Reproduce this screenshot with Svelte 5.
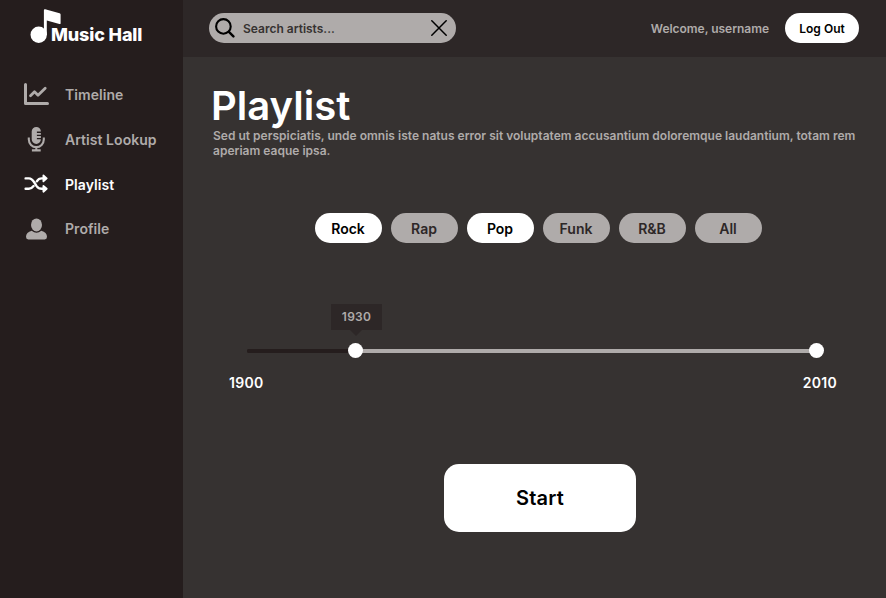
<script>
  let genres = $state([
    { name: 'Rock', on: true },
    { name: 'Rap', on: false },
    { name: 'Pop', on: true },
    { name: 'Funk', on: false },
    { name: 'R&B', on: false },
    { name: 'All', on: false }
  ]);
  const nav = ['Timeline', 'Artist Lookup', 'Playlist', 'Profile'];
  let active = $state('Playlist');
</script>

<div class="app">
  <aside>
    <div class="logo">
      <svg width="31" height="36" viewBox="0 0 31 36" fill="#fff">
        <circle cx="8.7" cy="26.8" r="8.2" />
        <path d="M13.9 2.2Q13.9 1 15.2 1.3L29.6 5.3Q30.6 5.6 30.6 6.5V15.2Q30.6 16.3 29.4 16L16.8 12.5V27H13.9Z" />
      </svg>
      <span>Music Hall</span>
    </div>
    <nav>
      {#each nav as item}
        <button class="item" class:active={active === item} onclick={() => (active = item)}>
          <svg width="28" height="28" viewBox="0 0 28 28" fill="none" stroke="currentColor">
            {#if item === 'Timeline'}
              <path d="M3.5 4.5V23.5H25.5" stroke-width="3" stroke-linecap="round" stroke-linejoin="round" />
              <path d="M8.5 15.8L12.5 11.8L16 15.2L23.2 8.3" stroke-width="2.8" stroke-linecap="round" stroke-linejoin="round" />
            {:else if item === 'Artist Lookup'}
              <path d="M9.8 6.2a4.6 4.6 0 0 1 9.2 0h-4v1.4h4v1.8h-4v1.4h4v1.8h-4v1.4h4a4.6 4.6 0 0 1-9.2 0Z" transform="translate(-.1 .3)" fill="currentColor" stroke="none" />
              <path d="M6.8 12.5V14.6A7.5 7.5 0 0 0 21.8 14.6V12.5M14.3 22V25M9.9 25.4H18.7" stroke-width="2.1" />
            {:else if item === 'Playlist'}
              <g transform="translate(.6 -.4)">
                <path d="M3 8.8H6.3C9 8.8 10.4 10.7 12 13.3L14 16.5C15.5 18.5 16.8 19.2 19.2 19.2H22M3 19.2H6.3C8.4 19.2 9.7 18.2 11 16.5M14.2 11.7C15.5 9.7 16.8 8.8 19.2 8.8H22" stroke-width="2.4" stroke-linecap="round" />
                <path d="M20.8 5.9L24.1 8.8L20.8 11.7ZM20.8 16.3L24.1 19.2L20.8 22.1Z" fill="currentColor" stroke-width="1.8" stroke-linejoin="round" />
              </g>
            {:else}
              <ellipse cx="14.5" cy="9.9" rx="5.5" ry="6.5" fill="currentColor" stroke="none" />
              <path d="M9.7 15.8Q14.5 19.6 19.3 15.8C23 17 25 18.8 25 21.8Q25 24.4 22.7 24.4H6.3Q4 24.4 4 21.8C4 18.8 6 17 9.7 15.8Z" fill="currentColor" stroke="none" />
            {/if}
          </svg>
          <span>{item}</span>
        </button>
      {/each}
    </nav>
  </aside>

  <div class="page">
    <header>
      <div class="search">
        <svg width="20" height="20" viewBox="0 0 20 20" fill="none" stroke="#000" stroke-linecap="round">
          <circle cx="8.4" cy="8.4" r="7.3" stroke-width="2.1" />
          <path d="M13.9 13.9L18.4 18.4" stroke-width="2.4" />
        </svg>
        <span>Search artists...</span>
        <svg width="16" height="16" viewBox="0 0 16 16" fill="none" stroke="#000" stroke-width="1.5" stroke-linecap="round">
          <path d="M.8 .8L15.2 15.2M15.2 .8L.8 15.2" />
        </svg>
      </div>
      <span class="welcome">Welcome, username</span>
      <button class="logout">Log Out</button>
    </header>

    <main>
      <h1>Playlist</h1>
      <p>Sed ut perspiciatis, unde omnis iste natus error sit voluptatem accusantium doloremque laudantium, totam rem aperiam eaque ipsa.</p>

      <div class="chips">
        {#each genres as g}
          <button class:on={g.on} onclick={() => (g.on = !g.on)}>{g.name}</button>
        {/each}
      </div>

      <div class="range">
        <div class="track">
          <div class="fill"></div>
          <i class="thumb" style="left: 108.5px"></i>
          <i class="thumb" style="left: 569.5px"></i>
          <div class="tip">1930</div>
        </div>
        <div class="ends"><span>1900</span><span>2010</span></div>
      </div>

      <button class="start">Start</button>
    </main>
  </div>
</div>

<style>
  :global(body) { margin: 0; background: #363231; }
  .app {
    display: flex;
    width: 886px;
    height: 598px;
    overflow: hidden;
    font-family: Inter, 'Liberation Sans', sans-serif;
    font-weight: 600;
    background: #363231;
    color: #fff;
  }
  button {
    font: inherit;
    border: 0;
    padding: 0;
    margin: 0;
    background: none;
    color: inherit;
    cursor: pointer;
  }
  svg { display: block; flex: none; }
  aside { width: 183px; flex: none; background: #251d1d; }
  .logo { display: flex; padding: 8px 0 0 30px; height: 64px; box-sizing: content-box; }
  .logo span {
    margin: 16px 0 0 -10px;
    font-size: 18px;
    line-height: 22px;
    font-weight: 800;
    letter-spacing: -0.15px;
    white-space: nowrap;
  }
  nav { display: flex; flex-direction: column; }
  .item {
    display: flex;
    align-items: center;
    height: 44.8px;
    padding-left: 22px;
    gap: 15px;
    color: #afabaa;
    font-size: 14px;
    letter-spacing: 0.05px;
  }
  .item.active { color: #fff; }
  .item.active span { padding-top: 1px; }
  .page { flex: 1; min-width: 0; display: flex; flex-direction: column; }
  header {
    display: flex;
    align-items: center;
    height: 57px;
    flex: none;
    box-sizing: border-box;
    padding: 0 27px 1px 26px;
    background: #2d2727;
    font-size: 12px;
  }
  .search {
    display: flex;
    align-items: center;
    box-sizing: border-box;
    width: 247px;
    height: 30px;
    padding: 0 9.5px 0 6px;
    border-radius: 15px;
    background: #afabaa;
    color: #363231;
  }
  .search span { flex: 1; margin-left: 8px; }
  .welcome { margin-left: auto; color: #afabaa; letter-spacing: -0.03px; }
  .logout {
    width: 74px;
    height: 30px;
    margin-left: 16px;
    border-radius: 15px;
    background: #fff;
    color: #000;
  }
  main { display: flex; flex-direction: column; padding: 25px 27px 0 28px; }
  h1 { margin: 0; font-size: 40px; line-height: 48px; font-weight: 600; }
  p {
    margin: -2px 0 0 2px;
    font-size: 12px;
    line-height: 15px;
    letter-spacing: 0.01px;
    color: #afabaa;
  }
  .chips { display: flex; gap: 9px; margin: 55px 0 0 104px; }
  .chips button {
    width: 67px;
    height: 30px;
    padding: 1px 1px 0 0;
    border-radius: 15px;
    background: #afabaa;
    color: #2d2727;
    font-size: 14px;
  }
  .chips button.on { background: #fff; color: #000; }
  .range { margin: 106px 0 0 18px; width: 608px; }
  .track {
    position: relative;
    width: 570px;
    height: 4px;
    margin-left: 18px;
    border-radius: 2px;
    background: linear-gradient(to right, #251d1d 108px, #afabaa 108px);
  }
  .fill { width: 108px; height: 4px; border-radius: 2px 0 0 2px; background: #251d1d; }
  .thumb {
    position: absolute;
    top: -6px;
    width: 15px;
    height: 15px;
    margin-left: -7.5px;
    border-radius: 50%;
    background: #fff;
  }
  .tip {
    position: absolute;
    left: 84px;
    top: -45px;
    width: 51px;
    height: 26px;
    line-height: 26px;
    text-align: center;
    font-size: 12px;
    letter-spacing: 0.25px;
    background: #2d2727;
    color: #afabaa;
  }
  .tip::after {
    content: '';
    position: absolute;
    left: 19px;
    top: 26px;
    border: 6.5px solid transparent;
    border-top-color: #2d2727;
    border-bottom: 0;
  }
  .ends {
    display: flex;
    justify-content: space-between;
    margin-top: 21px;
    font-size: 14px;
    line-height: 18px;
    letter-spacing: 0.3px;
  }
  .start {
    width: 192px;
    height: 68px;
    margin: 72px 0 0 233px;
    border-radius: 15px;
    background: #fff;
    color: #000;
    font-size: 20px;
    letter-spacing: 0.15px;
  }
</style>
